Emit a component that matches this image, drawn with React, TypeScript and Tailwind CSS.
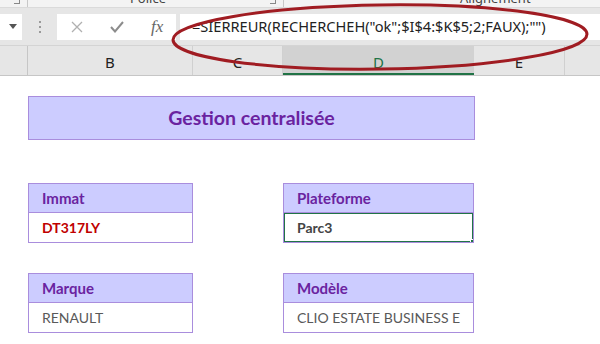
import React from "react"

const purple = "text-[#6a23a0]"

const FieldCell = ({ label, value, valueClass, selected, className }: { label: string, value: string, valueClass: string, selected?: boolean, className: string }) => {
    return (
        <div className={`${className} row-span-2 grid grid-rows-[30px_30px]`}>
            <div className={`bg-[#ccccff] border border-[#a98ddd] flex items-center pl-[13px] font-bold text-[15px] ${purple}`}>{label}</div>
            <div className={`relative bg-white border-x border-b border-[#a98ddd] flex items-center pl-[13px] text-[14px] overflow-hidden whitespace-nowrap ${valueClass}`}>
                {value}
                {selected ? (
                    <div className="absolute -left-px -top-px -right-px -bottom-px border-2 border-[#217346]">
                        <div className="absolute -right-[3px] -bottom-[3px] w-[5px] h-[5px] bg-[#217346] border border-white" />
                    </div>
                ) : null}
            </div>
        </div>
    )
}

export default function App() {
    return (
        <div className="relative w-[600px] h-[344px] overflow-hidden bg-white font-['Lato',sans-serif]">
            {/* ribbon bottom */}
            <div className="h-[8px] bg-[#f3f3f3] relative overflow-hidden border-b border-[#dadada] text-[13px] text-[#444] font-['Noto_Sans',sans-serif]">
                <span className="absolute left-[130px] -top-[11px]">Police</span>
                <span className="absolute left-[460px] -top-[11px]">Alignement</span>
                <div className="absolute left-[27px] top-0 h-full w-px bg-[#c8c8c8]" />
                <div className="absolute left-[283px] top-0 h-full w-px bg-[#c8c8c8]" />
                <div className="absolute left-[14px] -top-[2px] w-[6px] h-[6px] border-r border-b border-[#888]" />
                <div className="absolute left-[270px] -top-[2px] w-[6px] h-[6px] border-r border-b border-[#888]" />
            </div>

            {/* formula bar */}
            <div className="h-[38px] bg-[#e6e6e6] flex items-center border-b border-[#d4d4d4]">
                <div className="w-[22px] h-[26px] bg-white flex items-center justify-end pr-[5px]">
                    <svg width="8" height="5" viewBox="0 0 8 5"><path d="M0 0 L8 0 L4 5 Z" fill="#555" /></svg>
                </div>
                <div className="w-[35px] flex flex-col items-center gap-[3px]">
                    <div className="w-[2px] h-[2px] bg-[#999]" />
                    <div className="w-[2px] h-[2px] bg-[#999]" />
                    <div className="w-[2px] h-[2px] bg-[#999]" />
                </div>
                <div className="w-[119px] h-[26px] bg-white flex items-center">
                    <svg className="ml-[14px]" width="12" height="12" viewBox="0 0 12 12"><path d="M1 1 L11 11 M11 1 L1 11" stroke="#b0b0b0" strokeWidth="1.3" /></svg>
                    <svg className="ml-[27px]" width="14" height="12" viewBox="0 0 14 12"><path d="M1 6 L5 10.5 L13 1" stroke="#8c8c8c" strokeWidth="2" fill="none" /></svg>
                    <span className="ml-[27px] font-['Liberation_Serif',serif] italic text-[17px] text-[#666] leading-none">fx</span>
                </div>
                <div className="ml-[4px] flex-1 h-[26px] bg-white flex items-center pl-[12px] font-['Noto_Sans',sans-serif] text-[14.6px] text-[#222] whitespace-nowrap">
                    =SIERREUR(RECHERCHEH("ok";$I$4:$K$5;2;FAUX);"")
                </div>
            </div>

            {/* column headers */}
            <div className="h-[30px] bg-[#e6e6e6] border-b border-[#c6c6c6] grid grid-cols-[28px_165px_90px_191px_91px_1fr] font-['Noto_Sans',sans-serif] text-[15px] text-[#222]">
                <div className="border-r border-[#c6c6c6]" />
                <div className="border-r border-[#d0d0d0] flex items-end justify-center pb-[2px]">B</div>
                <div className="border-r border-[#d0d0d0] flex items-end justify-center pb-[2px]">C</div>
                <div className="bg-[#d2d2d2] border-b-2 border-[#217346] flex items-end justify-center text-[#217346]">D</div>
                <div className="border-r border-[#d0d0d0] flex items-end justify-center pb-[2px]">E</div>
                <div />
            </div>

            {/* sheet */}
            <div className="grid grid-cols-[28px_165px_90px_191px_91px_1fr] grid-rows-[20px_44px_43px_30px_30px_30px_30px_30px]">
                <div className="col-start-2 col-span-3 row-start-2 bg-[#ccccff] border border-[#a98ddd] flex items-center justify-center font-bold text-[19.5px] text-[#6a23a0] -mr-px">
                    Gestion centralisée
                </div>
                <FieldCell className="col-start-2 row-start-4" label="Immat" value="DT317LY" valueClass="font-bold text-[#c00000]" />
                <FieldCell className="col-start-4 row-start-4" label="Plateforme" value="Parc3" valueClass="font-bold text-[#444]" selected />
                <FieldCell className="col-start-2 row-start-7" label="Marque" value="RENAULT" valueClass="text-[#595959]" />
                <FieldCell className="col-start-4 row-start-7" label="Modèle" value="CLIO ESTATE BUSINESS E" valueClass="text-[#595959]" />
            </div>

            {/* red ellipse highlight */}
            <svg className="absolute left-0 top-0 pointer-events-none" width="600" height="90" viewBox="0 0 600 90">
                <ellipse cx="380" cy="37" rx="207" ry="32" transform="rotate(-0.8 380 37)" fill="none" stroke="#a01c22" strokeWidth="3" />
            </svg>
        </div>
    )
}
